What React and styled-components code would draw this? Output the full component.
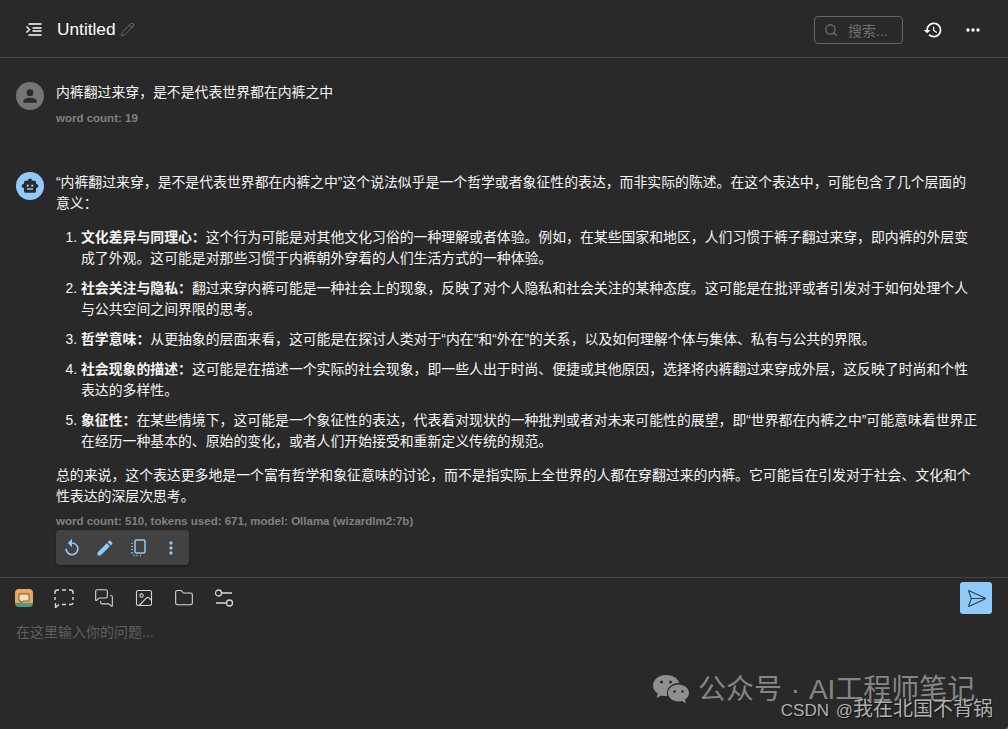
import styled, { createGlobalStyle } from 'styled-components';
import { Search, Pencil, Image as ImageIcon, Folder, SendHorizontal, MessagesSquare } from 'lucide-react';

const GlobalStyle = createGlobalStyle`
  html, body { margin: 0; height: 100%; background: #777; }
  body {
    font-family: "Liberation Sans", "Noto Sans CJK SC", sans-serif;
    color: #f5f5f5;
    overflow: hidden;
  }
`;

const Page = styled.div`
  position: relative;
  width: 1008px;
  height: 729px;
  display: flex;
  flex-direction: column;
  background: #292929;
  border-bottom-right-radius: 4px;
  overflow: hidden;
`;

const Header = styled.header`
  height: 58px;
  flex: none;
  box-sizing: border-box;
  display: flex;
  align-items: center;
  padding: 2px 25px 0 26px;
  border-bottom: 1px solid #444;
`;

const Title = styled.span`
  margin-left: 15px;
  font-size: 17.3px;
  color: #fff;
`;

const TitleEdit = styled.span`
  display: flex;
  margin-left: 4px;
  color: #777;
`;

const SearchBox = styled.div`
  margin-left: auto;
  width: 89px;
  height: 28px;
  box-sizing: border-box;
  border: 1px solid #666;
  border-radius: 4px;
  display: flex;
  align-items: center;
  gap: 10px;
  padding-left: 9px;
  color: #6f6f6f;
  font-size: 14px;
`;

const HeaderButton = styled.span`
  display: flex;
  margin-left: ${(p) => p.$gap}px;
  color: #fff;
`;

const Messages = styled.main`
  flex: none;
  height: 520px;
  padding-top: 24px;
  box-sizing: border-box;
  border-bottom: 1px solid #444;
`;

const Message = styled.article`
  display: flex;
  gap: 12px;
  padding: 0 30px 0 16px;
  margin-bottom: ${(p) => p.$bottom || 0}px;
`;

const Avatar = styled.div`
  width: 28px;
  height: 28px;
  flex: none;
  border-radius: 50%;
  display: flex;
  align-items: center;
  justify-content: center;
  background: ${(p) => (p.$bot ? '#90caf9' : '#757575')};
  color: #2b2b2b;
`;

const Body = styled.div`
  flex: 1;
  min-width: 0;
  font-size: 13.86px;
  line-height: 21px;
`;

const Paragraph = styled.p`
  margin: 0;
`;

const Stats = styled.div`
  margin-top: ${(p) => p.$top}px;
  font-size: 11.5px;
  line-height: 16px;
  font-weight: 700;
  color: #808080;
`;

const Steps = styled.ol`
  margin: 13px 0;
  padding: 0 0 0 25px;
`;

const Step = styled.li`
  margin-bottom: 9px;
  &:last-child { margin-bottom: 0; }
`;

const ActionBar = styled.div`
  width: 133px;
  height: 35px;
  margin-top: 1px;
  border-radius: 4px;
  background: #424242;
  box-shadow: 0 1px 3px rgba(0, 0, 0, 0.4);
  display: flex;
  align-items: center;
  gap: 13px;
  padding-left: 6px;
  box-sizing: border-box;
  color: #90caf9;
`;

const Composer = styled.section`
  flex: 1;
  padding: 4px 16px 0 15px;
`;

const ToolRow = styled.div`
  height: 32px;
  display: flex;
  align-items: center;
  gap: 20px;
  color: #d6d6d6;
`;

const AssistantBadge = styled.div`
  width: 18px;
  height: 18px;
  margin-right: 1px;
  box-sizing: border-box;
  border-radius: 4px;
  background: linear-gradient(#e9a866 80%, #4f9a7d 80%);
  display: flex;
  align-items: center;
  justify-content: center;
`;

const SendButton = styled.button`
  margin-left: auto;
  width: 32px;
  height: 32px;
  padding: 0;
  border: 0;
  border-radius: 3px;
  background: #90caf9;
  color: #2f4256;
  display: flex;
  align-items: center;
  justify-content: center;
`;

const Placeholder = styled.div`
  margin: 8px 0 0 1px;
  font-size: 14px;
  line-height: 20px;
  color: #5f5f5f;
`;

const Watermark = styled.div`
  position: absolute;
  left: 652px;
  top: 674px;
  display: flex;
  align-items: center;
  gap: 8px;
  font-size: 28px;
  line-height: 32px;
  word-spacing: 1px;
  color: #858585;
  white-space: nowrap;
`;

const Credit = styled.div`
  position: absolute;
  right: 15px;
  top: 697px;
  font-size: 17px;
  line-height: 24px;
  word-spacing: 2px;
  color: #b0b0b0;
  text-shadow: 1px 1px 1px #111;
  white-space: nowrap;
`;

const CreditName = styled.span`
  font-size: 20px;
`;

function MaterialIcon({ d, size = 20 }) {
  return (
    <svg width={size} height={size} viewBox="0 0 24 24" fill="currentColor">
      <path d={d} />
    </svg>
  );
}

const icons = {
  person: 'M12 12a4 4 0 1 0 0-8 4 4 0 0 0 0 8Zm0 2c-2.700 0-8 1.300-8 4v2h16v-2c0-2.700-5.300-4-8-4Z',
  bot: 'M20 9V7c0-1.100-.9-2-2-2h-3c0-1.660-1.340-3-3-3S9 3.340 9 5H6c-1.100 0-2 .9-2 2v2c-1.660 0-3 1.340-3 3s1.340 3 3 3v4c0 1.100.9 2 2 2h12c1.100 0 2-.9 2-2v-4c1.660 0 3-1.340 3-3s-1.340-3-3-3zM7.500 11.500c0-.83.67-1.500 1.500-1.500s1.500.67 1.500 1.500S9.830 13 9 13s-1.500-.67-1.500-1.500zM16 17H8v-2h8v2zm-1-4c-.83 0-1.500-.67-1.500-1.500S14.170 10 15 10s1.500.67 1.500 1.500S15.830 13 15 13z',
  history: 'M13 3c-4.970 0-9 4.030-9 9H1l3.890 3.890.07.14L9 12H6c0-3.870 3.130-7 7-7s7 3.130 7 7-3.130 7-7 7c-1.930 0-3.680-.79-4.940-2.060l-1.420 1.420C8.270 19.990 10.510 21 13 21c4.970 0 9-4.030 9-9s-4.030-9-9-9zm-1 5v5l4.280 2.540.72-1.210-3.500-2.080V8H12z',
  moreHoriz: 'M6 10a2 2 0 1 0 0 4 2 2 0 0 0 0-4zm12 0a2 2 0 1 0 0 4 2 2 0 0 0 0-4zm-6 0a2 2 0 1 0 0 4 2 2 0 0 0 0-4z',
  moreVert: 'M12 8a2 2 0 1 0 0-4 2 2 0 0 0 0 4zm0 2a2 2 0 1 0 0 4 2 2 0 0 0 0-4zm0 6a2 2 0 1 0 0 4 2 2 0 0 0 0-4z',
  replay: 'M12 5V1L7 6l5 5V7c3.310 0 6 2.690 6 6s-2.690 6-6 6-6-2.690-6-6H4c0 4.420 3.580 8 8 8s8-3.580 8-8-3.580-8-8-8z',
  edit: 'M3 17.250V21h3.750L17.810 9.940l-3.750-3.750L3 17.250zM20.710 7.040a1 1 0 0 0 0-1.410l-2.340-2.340a1 1 0 0 0-1.410 0l-1.830 1.830 3.750 3.750 1.830-1.830z',
};

function SidebarIcon() {
  return (
    <svg width="16" height="13" viewBox="0 0 16 13" fill="none" stroke="#fff" strokeWidth="1.400">
      <path d="M.5 3.500 3.500 6.500.5 9.500M2.500 1h13M6.500 5h9M6.500 8h9M2.500 12h13" />
    </svg>
  );
}

function CopyPagesIcon() {
  return (
    <svg width="20" height="20" viewBox="-2 -1 20 20" fill="none" stroke="currentColor" strokeWidth="1.500">
      <rect x="5" y="1" width="10" height="13" rx="1.500" />
      <path d="M2 4v1M2 7v1M2 10v1M2 13v1.500M3.500 16.500h1M6.500 16.500h1M10 16.500h1" />
    </svg>
  );
}

function DashedChatIcon() {
  return (
    <svg width="20" height="20" viewBox="0 0 20 20" fill="none" stroke="currentColor" strokeWidth="1.400">
      <path d="M1 6V4.500A2.500 2.500 0 0 1 3.500 2H5M8 2h4M15 2h1.500A2.500 2.500 0 0 1 19 4.500V6M19 9v3M19 15a2 2 0 0 1-2 1.500h-2M12 16.500H8M5 16.500 1.500 19.500V15M1 12V9" />
    </svg>
  );
}

function ControlsIcon() {
  return (
    <svg width="20" height="20" viewBox="0 0 20 20" fill="none" stroke="currentColor" strokeWidth="1.300">
      <circle cx="4.500" cy="5" r="3" />
      <path d="M7.500 5H18M2 15h10.500" />
      <circle cx="15.500" cy="15" r="3" />
    </svg>
  );
}

function WeChatIcon() {
  return (
    <svg width="38" height="32" viewBox="0 0 38 32" fill="#8f8f8f">
      <path d="M14 1C6.800 1 1 5.700 1 11.500c0 3.300 1.900 6.200 4.800 8.100L4.500 24l5-2.600c1.400.4 2.900.6 4.500.6.500 0 1 0 1.400-.1-.3-1-.4-1.900-.4-2.900 0-5.500 5.100-9.900 11.400-9.900h1C26 4 20.500 1 14 1Z" />
      <path d="M37 19c0-4.700-4.700-8.500-10.500-8.500S16 14.300 16 19s4.700 8.500 10.500 8.500c1.200 0 2.400-.2 3.500-.5l4 2.200-1-3.600c2.400-1.600 4-4 4-6.600Z" />
      <g fill="#292929">
        <circle cx="9.500" cy="8" r="1.500" />
        <circle cx="18.500" cy="8" r="1.500" />
        <circle cx="22.500" cy="17.500" r="1.300" />
        <circle cx="30.500" cy="17.500" r="1.300" />
      </g>
    </svg>
  );
}

const steps = [
  ['文化差异与同理心：', '这个行为可能是对其他文化习俗的一种理解或者体验。例如，在某些国家和地区，人们习惯于裤子翻过来穿，即内裤的外层变成了外观。这可能是对那些习惯于内裤朝外穿着的人们生活方式的一种体验。'],
  ['社会关注与隐私：', '翻过来穿内裤可能是一种社会上的现象，反映了对个人隐私和社会关注的某种态度。这可能是在批评或者引发对于如何处理个人与公共空间之间界限的思考。'],
  ['哲学意味：', '从更抽象的层面来看，这可能是在探讨人类对于“内在”和“外在”的关系，以及如何理解个体与集体、私有与公共的界限。'],
  ['社会现象的描述：', '这可能是在描述一个实际的社会现象，即一些人出于时尚、便捷或其他原因，选择将内裤翻过来穿成外层，这反映了时尚和个性表达的多样性。'],
  ['象征性：', '在某些情境下，这可能是一个象征性的表达，代表着对现状的一种批判或者对未来可能性的展望，即“世界都在内裤之中”可能意味着世界正在经历一种基本的、原始的变化，或者人们开始接受和重新定义传统的规范。'],
];

export default function App() {
  return (
    <Page>
      <GlobalStyle />
      <Header>
        <SidebarIcon />
        <Title>Untitled</Title>
        <TitleEdit><Pencil size={15} strokeWidth={1.300} /></TitleEdit>
        <SearchBox><Search size={14} strokeWidth={2.200} />搜索...</SearchBox>
        <HeaderButton $gap={20}><MaterialIcon d={icons.history} /></HeaderButton>
        <HeaderButton $gap={20}><MaterialIcon d={icons.moreHoriz} /></HeaderButton>
      </Header>
      <Messages>
        <Message $bottom={46}>
          <Avatar><MaterialIcon d={icons.person} /></Avatar>
          <Body>
            <Paragraph>内裤翻过来穿，是不是代表世界都在内裤之中</Paragraph>
            <Stats $top={7}>word count: 19</Stats>
          </Body>
        </Message>
        <Message>
          <Avatar $bot><MaterialIcon d={icons.bot} size={18} /></Avatar>
          <Body>
            <Paragraph>“内裤翻过来穿，是不是代表世界都在内裤之中”这个说法似乎是一个哲学或者象征性的表达，而非实际的陈述。在这个表达中，可能包含了几个层面的意义：</Paragraph>
            <Steps>
              {steps.map(([lead, text]) => (
                <Step key={lead}><strong>{lead}</strong>{text}</Step>
              ))}
            </Steps>
            <Paragraph>总的来说，这个表达更多地是一个富有哲学和象征意味的讨论，而不是指实际上全世界的人都在穿翻过来的内裤。它可能旨在引发对于社会、文化和个性表达的深层次思考。</Paragraph>
            <Stats $top={6}>word count: 510, tokens used: 671, model: Ollama (wizardlm2:7b)</Stats>
            <ActionBar>
              <MaterialIcon d={icons.replay} />
              <MaterialIcon d={icons.edit} />
              <CopyPagesIcon />
              <MaterialIcon d={icons.moreVert} />
            </ActionBar>
          </Body>
        </Message>
      </Messages>
      <Composer>
        <ToolRow>
          <AssistantBadge>
            <svg width="12" height="12" viewBox="0 0 12 12" fill="#f6e3bd" stroke="#7c5a32" strokeWidth="1">
              <path d="M1 2h10v7H5l-2 2V9H1Z" />
            </svg>
          </AssistantBadge>
          <DashedChatIcon />
          <MessagesSquare size={20} strokeWidth={1.300} />
          <ImageIcon size={20} strokeWidth={1.300} />
          <Folder size={20} strokeWidth={1.300} />
          <ControlsIcon />
          <SendButton><SendHorizontal size={21} strokeWidth={1.300} /></SendButton>
        </ToolRow>
        <Placeholder>在这里输入你的问题...</Placeholder>
      </Composer>
      <Watermark><WeChatIcon />公众号 · AI工程师笔记</Watermark>
      <Credit>CSDN @<CreditName>我在北国不背锅</CreditName></Credit>
    </Page>
  );
}
